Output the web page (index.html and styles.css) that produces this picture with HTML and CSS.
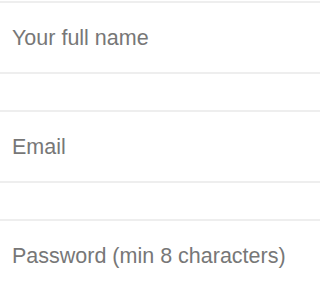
FILE: index.html
```html
<!DOCTYPE html>
<html>
<head>
<meta charset="utf-8">
<link rel="stylesheet" href="styles.css">
</head>
<body>
<form class="form">
  <input class="field" type="text" placeholder="Your full name">
  <input class="field" type="email" placeholder="Email">
  <input class="field" type="password" placeholder="Password (min 8 characters)">
</form>
</body>
</html>
```

FILE: styles.css
```css
html, body {
  margin: 0;
  padding: 0;
  background: #ffffff;
}
.form {
  display: flex;
  flex-direction: column;
  gap: 36px;
  padding-top: 1px;
}
.field {
  box-sizing: border-box;
  height: 73px;
  width: 100%;
  margin: 0;
  padding: 2px 0 0 12px;
  border: none;
  border-top: 2px solid #eeeeee;
  border-bottom: 2px solid #eeeeee;
  background: #ffffff;
  font-family: "Liberation Sans", Arial, sans-serif;
  font-size: 21.5px;
  color: #555555;
  outline: none;
}
.field::placeholder {
  color: #777777;
  opacity: 1;
}
```
